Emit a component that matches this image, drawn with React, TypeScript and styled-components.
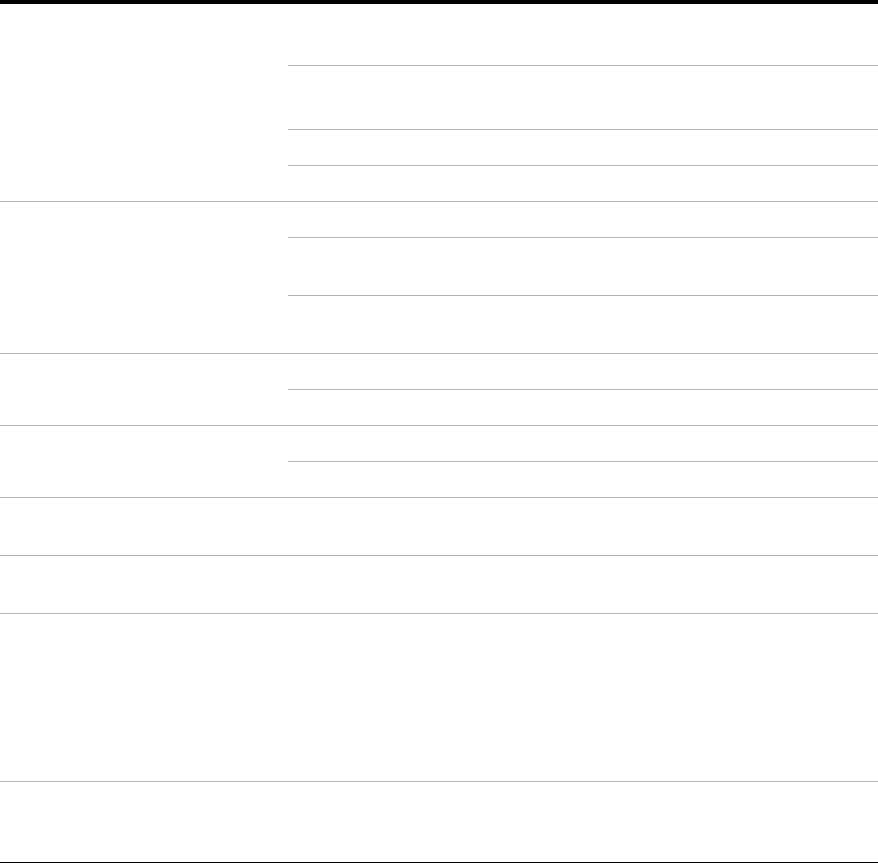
import React from "react"
import styled, { createGlobalStyle } from "styled-components"

const GlobalStyle = createGlobalStyle`
  html, body {
    margin: 0;
    padding: 0;
    background: #ffffff;
    font-family: "Liberation Sans", Arial, sans-serif;
  }
`

// row heights of each group, left label cell spans the group
const groups: number[][] = [
  [61, 63, 35, 35],
  [35, 57, 57],
  [35, 35],
  [35, 35],
  [57],
  [57],
  [167],
  [80],
]

const App = () => {
  return (
    <>
      <GlobalStyle />
      <Table>
        {groups.map((rows, gi) => (
          <Group key={gi} $last={gi === groups.length - 1}>
            <LabelCell />
            <ValueColumn>
              {rows.map((h, ri) => (
                <ValueRow key={ri} $h={h} />
              ))}
            </ValueColumn>
          </Group>
        ))}
      </Table>
    </>
  )
}

const Table = styled.div`
  width: 100%;
  display: flex;
  flex-direction: column;
  border-top: 4px solid #000000;
  border-bottom: 1px solid #000000;
  box-sizing: border-box;
`

const Group = styled.div<{ $last?: boolean }>`
  display: flex;
  flex-direction: row;
  border-bottom: ${(p) => (p.$last ? "none" : "1px solid #b3b3b3")};
`

const LabelCell = styled.div`
  width: 288px;
  flex-shrink: 0;
`

const ValueColumn = styled.div`
  flex: 1;
  display: flex;
  flex-direction: column;
`

const ValueRow = styled.div<{ $h: number }>`
  height: ${(p) => p.$h}px;
  border-bottom: 1px solid #b3b3b3;
  &:last-child {
    border-bottom: none;
  }
`

export default App
